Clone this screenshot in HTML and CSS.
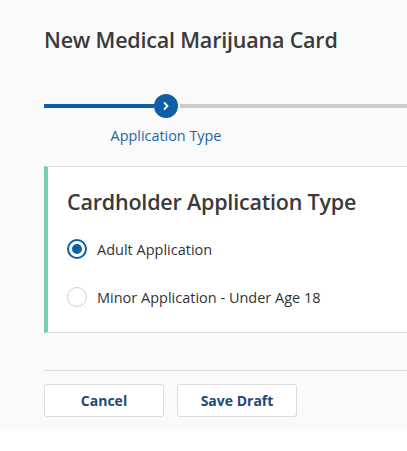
FILE: index.html
```html
<!DOCTYPE html>
<html>
<head>
<meta charset="utf-8">
<link rel="stylesheet" href="styles.css">
</head>
<body>
<div class="page">
  <h1 class="title">New Medical Marijuana Card</h1>
  <div class="stepper">
    <div class="step-track">
      <div class="line done"></div>
      <div class="dot">
        <svg width="10" height="10" viewBox="0 0 10 10"><path d="M3.5 2 L6.5 5 L3.5 8" fill="none" stroke="#fff" stroke-width="1.8" stroke-linecap="round" stroke-linejoin="round"/></svg>
      </div>
      <div class="line todo"></div>
    </div>
    <div class="step-label">Application Type</div>
  </div>
  <section class="card">
    <h2 class="card-title">Cardholder Application Type</h2>
    <label class="radio-row"><span class="radio checked"></span><span>Adult Application</span></label>
    <label class="radio-row"><span class="radio"></span><span>Minor Application - Under Age 18</span></label>
  </section>
  <div class="footer">
    <button class="btn">Cancel</button>
    <button class="btn">Save Draft</button>
  </div>
</div>
</body>
</html>
```
FILE: styles.css
```css
html, body {
  margin: 0;
  padding: 0;
  background: #ffffff;
}
body {
  font-family: "Open Sans", "Noto Sans", sans-serif;
  color: #333;
}
.page {
  background: #fafafa;
  height: 431px;
  padding-left: 44px;
  box-sizing: border-box;
  padding-top: 24px;
  overflow: hidden;
}
.title {
  margin: 0;
  font-size: 21.5px;
  font-weight: 600;
  color: #3a3a3a;
  line-height: 32px;
  letter-spacing: -0.2px;
}
.stepper {
  margin-top: 38px;
}
.step-track {
  display: flex;
  align-items: center;
  height: 24px;
}
.line {
  height: 4px;
}
.line.done {
  width: 110px;
  background: #0d5fa6;
}
.line.todo {
  flex: 1;
  background: #cccccc;
  margin-left: 2px;
}
.dot {
  width: 24px;
  height: 24px;
  border-radius: 50%;
  background: #0d5fa6;
  display: flex;
  align-items: center;
  justify-content: center;
}
.dot svg { display: block; }
.step-label {
  width: 244px;
  text-align: center;
  font-size: 14.4px;
  color: #1f63a3;
  margin-top: 8px;
  line-height: 20px;
  white-space: nowrap;
}
.card {
  margin-top: 20px;
  background: #fff;
  border-top: 1px solid #dedede;
  border-bottom: 1px solid #dedede;
  border-left: 4px solid #74cfb6;
  padding: 20px 0 23px 19px;
}
.card-title {
  margin: 0 0 20px;
  font-size: 21.5px;
  font-weight: 600;
  color: #3a3a3a;
  line-height: 30px;
  letter-spacing: -0.2px;
}
.radio-row {
  display: flex;
  align-items: center;
  gap: 10px;
  font-size: 14.5px;
  color: #333;
  height: 24px;
}
.radio-row + .radio-row {
  margin-top: 24px;
}
.radio {
  width: 20px;
  height: 20px;
  box-sizing: border-box;
  border-radius: 50%;
  border: 1px solid #d0d0d0;
  background: #fff;
  display: flex;
  align-items: center;
  justify-content: center;
}
.radio.checked {
  border: 2px solid #0d5fa6;
}
.radio.checked::after {
  content: "";
  width: 10px;
  height: 10px;
  border-radius: 50%;
  background: #0d5fa6;
}
.footer {
  margin-top: 37px;
  border-top: 1px solid #dcdcdc;
  padding-top: 13px;
  display: flex;
  gap: 13px;
}
.btn {
  width: 120px;
  height: 33px;
  background: #fff;
  border: 1px solid #dcdcdc;
  border-radius: 3px;
  font-family: "Open Sans", "Noto Sans", sans-serif;
  font-size: 14px;
  font-weight: 700;
  color: #1b4a78;
  padding: 0;
}
```
